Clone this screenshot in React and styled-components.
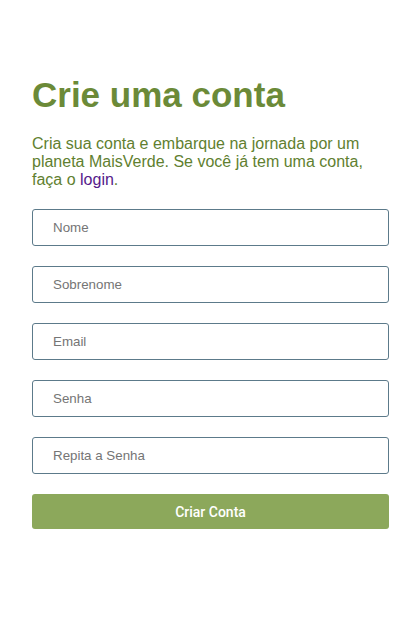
import React from 'react'
import styled, { createGlobalStyle } from 'styled-components'

const GlobalStyle = createGlobalStyle`
  body {
    margin: 0;
    background: #ffffff;
    font-family: "Liberation Sans", Arial, sans-serif;
  }
`

const Page = styled.main`
  padding: 75px 30px 40px 32px;
`

const Title = styled.h1`
  margin: 0 0 20px;
  font-size: 35px;
  font-weight: 700;
  color: #6b8a38;
`

const Intro = styled.p`
  margin: 0 0 20px;
  font-size: 16px;
  color: #617f30;
`

const Link = styled.a`
  color: #551a8b;
  text-decoration: none;
`

const Form = styled.form`
  display: flex;
  flex-direction: column;
  gap: 20px;
`

const Field = styled.input`
  box-sizing: border-box;
  height: 37px;
  width: 100%;
  padding: 0 20px;
  border: 1px solid #5c7a8a;
  border-radius: 3px;
  font-family: "Liberation Sans", Arial, sans-serif;
  font-size: 13.333px;
  color: #333;
  background: #fff;
  &::placeholder {
    color: #757575;
  }
`

const Submit = styled.button`
  height: 35px;
  width: 100%;
  border: none;
  border-radius: 3px;
  background: #8ca85b;
  color: #ffffff;
  font-family: Roboto, "Liberation Sans", sans-serif;
  font-size: 14px;
  font-weight: 500;
  cursor: pointer;
`

const fields = [
  { name: 'nome', type: 'text', label: 'Nome' },
  { name: 'sobrenome', type: 'text', label: 'Sobrenome' },
  { name: 'email', type: 'email', label: 'Email' },
  { name: 'senha', type: 'password', label: 'Senha' },
  { name: 'senha2', type: 'password', label: 'Repita a Senha' },
]

const App = () => {
  return (
    <Page>
      <GlobalStyle />
      <Title>Crie uma conta</Title>
      <Intro>
        Cria sua conta e embarque na jornada por um planeta MaisVerde. Se você já tem uma
        conta, faça o <Link href="#login">login</Link>.
      </Intro>
      <Form onSubmit={(e) => e.preventDefault()}>
        {fields.map((f) => (
          <Field key={f.name} name={f.name} type={f.type} placeholder={f.label} />
        ))}
        <Submit type="submit">Criar Conta</Submit>
      </Form>
    </Page>
  )
}

export default App
